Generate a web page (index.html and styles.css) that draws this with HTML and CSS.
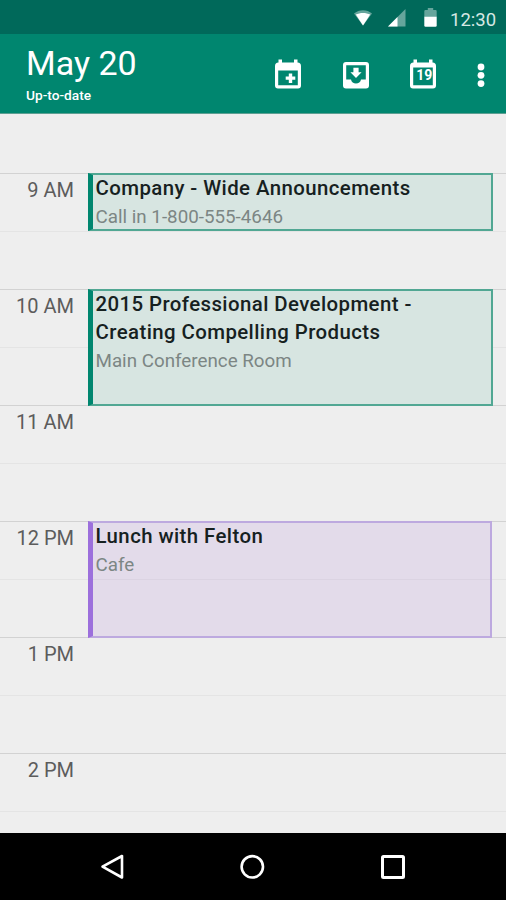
FILE: index.html
```html
<!DOCTYPE html>
<html lang="en">
<head>
    <meta charset="UTF-8">
    <meta name="viewport" content="width=device-width, initial-scale=1.0">
    <title>May 20</title>
    <link rel="stylesheet" href="styles.css">
</head>
<body>
    <div class="screen">
        <div class="status-bar">
            <svg class="wifi" width="18" height="16" viewBox="0 0 18 16">
                <path d="M0 3.5C5 -1 13 -1 18 3.5L9 15.5Z" fill="#fff" opacity="0.4"/>
                <path d="M1.8 4.6C6 2.4 12 2.4 16.2 4.6L9 15.5Z" fill="#fff"/>
            </svg>
            <svg class="signal" width="18" height="18" viewBox="0 0 18 18">
                <path d="M0 17.5L17.5 0V17.5Z" fill="#fff" opacity="0.4"/>
                <path d="M0 17.5L9.5 8V17.5Z" fill="#fff"/>
            </svg>
            <svg class="battery" width="13" height="19" viewBox="0 0 13 19">
                <path d="M1.5 2H3.8V0H9.2V2H11.5Q12.7 2 12.7 3.2V9H0.3V3.2Q0.3 2 1.5 2Z" fill="#fff" opacity="0.4"/>
                <path d="M0.3 8.8H12.7V17.5Q12.7 18.7 11.5 18.7H1.5Q0.3 18.7 0.3 17.5Z" fill="#fff"/>
            </svg>
            <span class="clock">12:30</span>
        </div>

        <div class="app-bar">
            <div class="heading">
                <h1 class="title">May 20</h1>
                <div class="sync">Up-to-date</div>
            </div>
            <div class="actions">
                <svg width="28" height="32" viewBox="0 0 28 32">
                    <path fill="#fff" fill-rule="evenodd" d="M4.5 0.5H8V3.5H20V0.5H23.5V3.5Q27 3.5 27 7V26.5Q27 29.5 24 29.5H4Q1 29.5 1 26.5V7Q1 3.5 4.5 3.5ZM4.2 11.5V26.3H23.8V11.5Z"/>
                    <path fill="#fff" d="M14.8 14.5H18.2V17.6H21.3V20.8H18.2V23.9H14.8V20.8H11.7V17.6H14.8Z"/>
                </svg>
                <svg width="28" height="32" viewBox="0 0 28 32">
                    <path fill="#fff" fill-rule="evenodd" d="M4 3H24Q27 3 27 6V26.5Q27 29.5 24 29.5H4Q1 29.5 1 26.5V6Q1 3 4 3ZM4.2 6.2V20.5H9C9.6 25.7 18.4 25.7 19 20.5H23.8V6.2Z"/>
                    <path fill="#fff" d="M11.4 8.7H16.6V13.2H19.6L14 19L8.4 13.2H11.4Z"/>
                </svg>
                <svg width="28" height="32" viewBox="0 0 28 32">
                    <path fill="#fff" fill-rule="evenodd" d="M4.5 0.5H8V3.5H20V0.5H23.5V3.5Q27 3.5 27 7V26.5Q27 29.5 24 29.5H4Q1 29.5 1 26.5V7Q1 3.5 4.5 3.5ZM4.2 8.5V26.3H23.8V8.5Z"/>
                    <text class="icon-day" x="15.2" y="21.3" text-anchor="middle">19</text>
                </svg>
                <svg width="8" height="32" viewBox="0 0 8 32">
                    <circle cx="4" cy="8" r="3.4" fill="#fff"/>
                    <circle cx="4" cy="16.3" r="3.4" fill="#fff"/>
                    <circle cx="4" cy="24.6" r="3.4" fill="#fff"/>
                </svg>
            </div>
        </div>

        <div class="day">
            <div class="hour first"></div>
            <div class="hour">
                <div class="time">9 AM</div>
                <div class="event half">
                    <div class="name">Company - Wide Announcements</div>
                    <div class="place">Call in 1-800-555-4646</div>
                </div>
            </div>
            <div class="hour">
                <div class="time">10 AM</div>
                <div class="event">
                    <div class="name">2015 Professional Development -<br>Creating Compelling Products</div>
                    <div class="place">Main Conference Room</div>
                </div>
            </div>
            <div class="hour">
                <div class="time">11 AM</div>
            </div>
            <div class="hour">
                <div class="time">12 PM</div>
                <div class="event purple">
                    <div class="name">Lunch with Felton</div>
                    <div class="place">Cafe</div>
                </div>
            </div>
            <div class="hour">
                <div class="time">1 PM</div>
            </div>
            <div class="hour">
                <div class="time">2 PM</div>
            </div>
        </div>

        <div class="nav-bar">
            <svg width="26" height="28" viewBox="0 0 26 28">
                <path d="M22 3V24.5L2.5 13.7Z" fill="none" stroke="#fff" stroke-width="2.6" stroke-linejoin="round"/>
            </svg>
            <svg width="26" height="28" viewBox="0 0 26 28">
                <circle cx="12.3" cy="13.8" r="10.7" fill="none" stroke="#fff" stroke-width="2.6"/>
            </svg>
            <svg width="26" height="28" viewBox="0 0 26 28">
                <rect x="2.5" y="3.5" width="21" height="21" rx="1" fill="none" stroke="#fff" stroke-width="3"/>
            </svg>
        </div>
    </div>
</body>
</html>
```
FILE: styles.css
```css
body {
    margin: 0;
    font-family: Roboto, "Liberation Sans", sans-serif;
    background: #eeeeee;
}
.screen {
    display: flex;
    flex-direction: column;
    width: 506px;
    height: 900px;
    overflow: hidden;
}

/* status bar */
.status-bar {
    display: flex;
    align-items: center;
    justify-content: flex-end;
    flex: none;
    box-sizing: border-box;
    height: 34px;
    padding-right: 11px;
    padding-top: 2px;
    background: #00695a;
}
.signal {
    margin-left: 16px;
}
.battery {
    margin-left: 18px;
    margin-top: -1px;
}
.clock {
    width: 45px;
    margin-left: 13px;
    margin-top: 3px;
    font-size: 18.5px;
    line-height: 22px;
    text-align: right;
    white-space: nowrap;
    color: #d6e8e4;
}

/* toolbar */
.app-bar {
    display: flex;
    justify-content: space-between;
    flex: none;
    box-sizing: border-box;
    height: 80px;
    padding: 8px 21px 0 26px;
    background: #00866f;
    border-bottom: 1px solid #5d9f92;
    color: #fff;
}
.title {
    margin: 0;
    font-size: 34px;
    font-weight: 400;
    line-height: 42px;
}
.sync {
    margin-top: 2px;
    font-size: 13.7px;
    font-weight: 500;
    line-height: 18px;
}
.actions {
    display: flex;
    gap: 39.7px;
    padding-top: 16.7px;
}
.icon-day {
    font-size: 14px;
    font-weight: 700;
    fill: #fff;
}

/* hours */
.day {
    flex: 1;
    min-height: 0;
    overflow: hidden;
}
.hour {
    display: flex;
    box-sizing: border-box;
    height: 116px;
    border-top: 1px solid #d2d2d2;
    background: linear-gradient(#e4e4e4, #e4e4e4) 0 57px / 100% 1px no-repeat;
}
.hour.first {
    height: 59px;
    border-top: 0;
    background: none;
}
.time {
    width: 74px;
    padding-top: 3px;
    font-size: 20px;
    line-height: 26px;
    text-align: right;
    color: #5c5c5c;
}
.event {
    box-sizing: border-box;
    width: 405px;
    height: 117px;
    margin: -1px 0 0 14px;
    padding-left: 2.5px;
    border: 2px solid #51a793;
    border-left: 5px solid #00866f;
    background: #d7e5e1;
}
.event.half {
    height: 58px;
}
.event.purple {
    width: 404px;
    border-color: #bda9df;
    border-left-color: #9c6fdc;
    background: rgba(147, 75, 210, 0.11);
}
.name {
    margin-top: -1px;
    font-size: 20.4px;
    font-weight: 500;
    line-height: 28px;
    letter-spacing: 0.42px;
    white-space: nowrap;
    color: #16211f;
}
.place {
    font-size: 18.8px;
    line-height: 31px;
    color: #7c8684;
}

/* bottom navigation */
.nav-bar {
    display: flex;
    align-items: center;
    justify-content: space-between;
    flex: none;
    box-sizing: border-box;
    height: 67px;
    padding: 0 100px;
    background: #000;
}
```
